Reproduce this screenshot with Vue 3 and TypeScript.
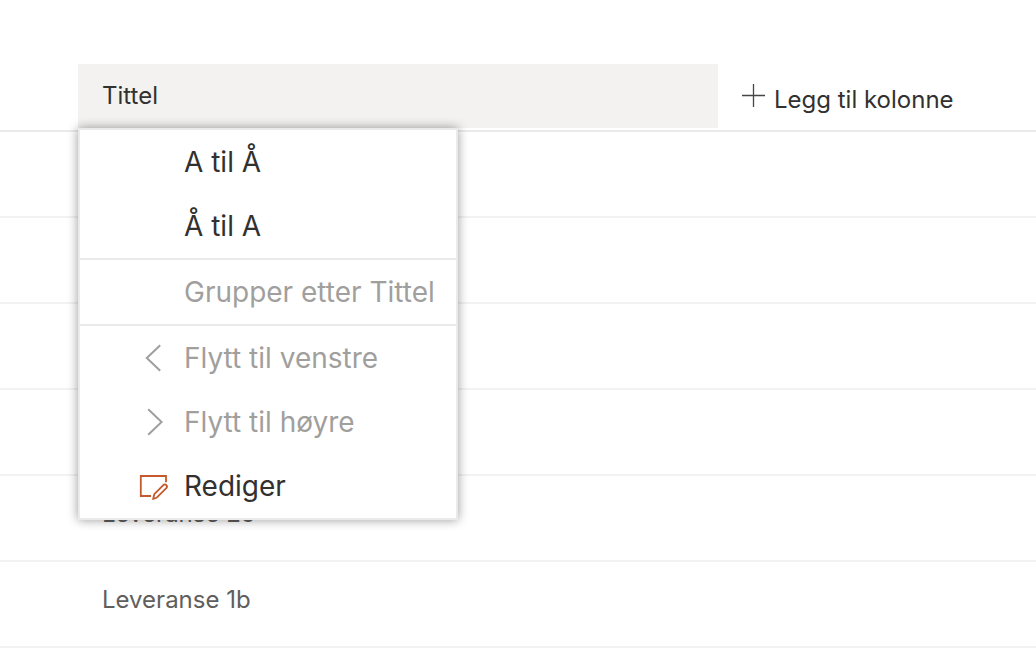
<script setup lang="ts">
import { ref } from 'vue'

interface MenuItem {
  label: string
  icon?: 'left' | 'right' | 'edit'
  disabled?: boolean
}

const menuGroups: MenuItem[][] = [
  [{ label: 'A til Å' }, { label: 'Å til A' }],
  [{ label: 'Grupper etter Tittel', disabled: true }],
  [
    { label: 'Flytt til venstre', icon: 'left', disabled: true },
    { label: 'Flytt til høyre', icon: 'right', disabled: true },
    { label: 'Rediger', icon: 'edit' },
  ],
]

const rows: string[] = ['', '', '', '', 'Leveranse 2c', 'Leveranse 1b']
const menuOpen = ref(true)
</script>

<template>
  <main class="list">
    <table class="grid">
      <colgroup>
        <col class="col-select" />
        <col class="col-title" />
        <col />
      </colgroup>
      <thead>
        <tr>
          <td></td>
          <th scope="col">
            <div class="title-head">
              <button
                type="button"
                class="title-button"
                aria-haspopup="menu"
                :aria-expanded="menuOpen"
                @click="menuOpen = !menuOpen"
              >
                Tittel
              </button>
              <div v-if="menuOpen" class="menu" role="menu">
                <div v-for="(group, g) in menuGroups" :key="g" class="group" role="group">
                  <button
                    v-for="item in group"
                    :key="item.label"
                    type="button"
                    role="menuitem"
                    class="item"
                    :disabled="item.disabled"
                  >
                    <svg class="icon" :class="item.icon" viewBox="0 0 36 36" aria-hidden="true">
                      <path v-if="item.icon === 'left'" d="M24.2 5.2 10.8 18l13.4 12.8" />
                      <path v-else-if="item.icon === 'right'" d="M12.2 5.2 25.6 18 12.2 30.8" />
                      <template v-else-if="item.icon === 'edit'">
                        <path d="M30 14.2V8H4.8v20H15" />
                        <path
                          d="M17.2 30.9l1.1-4.7 9-9.1c.9-.9 2.2-.9 3 0s.9 2.1 0 3l-9.1 9.1c-1.1 1-2.5 1.5-4 1.7z"
                        />
                      </template>
                    </svg>
                    <span>{{ item.label }}</span>
                  </button>
                </div>
              </div>
            </div>
          </th>
          <th scope="col">
            <button type="button" class="add">
              <svg class="plus" viewBox="0 0 24 24" aria-hidden="true">
                <path d="M11.5 0v23M0 11.5h23" />
              </svg>
              <span>Legg til kolonne</span>
            </button>
          </th>
        </tr>
      </thead>
      <tbody>
        <tr v-for="(row, i) in rows" :key="i">
          <td></td>
          <td class="name">{{ row }}</td>
          <td></td>
        </tr>
      </tbody>
    </table>
  </main>
</template>

<style>
body {
  background: #fff;
}
</style>

<style scoped>
.list {
  padding-top: 64px;
  font-family: Inter, 'Liberation Sans', sans-serif;
  font-size: 24px;
  font-variant-ligatures: none;
  line-height: 32px;
  color: #323130;
}

.grid {
  width: 100%;
  table-layout: fixed;
  border-collapse: separate;
  border-spacing: 0;
}

.col-select {
  width: 78px;
}

.col-title {
  width: 640px;
}

button {
  margin: 0;
  border: 0;
  background: none;
  font: inherit;
  font-variant-ligatures: inherit;
  color: inherit;
  text-align: left;
}

th,
td {
  box-sizing: border-box;
  padding: 0;
  font-weight: 400;
  text-align: left;
  vertical-align: top;
}

thead th,
thead td {
  height: 68px;
  border-bottom: 2px solid #eaeaea;
}

.title-head {
  position: relative;
}

.title-button {
  display: block;
  width: 100%;
  height: 64px;
  padding: 0 24px;
  background: #f3f2f1;
}

.add {
  display: flex;
  align-items: flex-start;
  gap: 8px;
  padding: 20px 24px 0;
  white-space: nowrap;
}

.plus {
  width: 24px;
  height: 24px;
  fill: none;
  stroke: #484644;
  stroke-width: 1.3;
}

tbody td {
  height: 86px;
  border-bottom: 2px solid #f3f2f1;
}

.name {
  padding: 22px 24px 0;
  color: #605e5c;
}

.menu {
  position: absolute;
  top: 100%;
  left: 0;
  z-index: 1;
  box-sizing: border-box;
  width: 380px;
  border: 2px solid #eaeaea;
  background: #fff;
  box-shadow: 0 0 10px rgba(0, 0, 0, 0.4);
  font-size: 28px;
}

.group + .group {
  border-top: 2px solid #eaeaea;
}

.item {
  display: flex;
  align-items: center;
  gap: 12px;
  width: 100%;
  height: 64px;
  padding: 0 20px 0 56px;
  white-space: nowrap;
}

.item:disabled {
  color: #a19f9d;
}

.icon {
  flex: none;
  width: 36px;
  height: 36px;
  fill: none;
  stroke: currentColor;
  stroke-width: 2;
}

.edit {
  stroke: #c4592b;
  stroke-width: 1.8;
}
</style>
